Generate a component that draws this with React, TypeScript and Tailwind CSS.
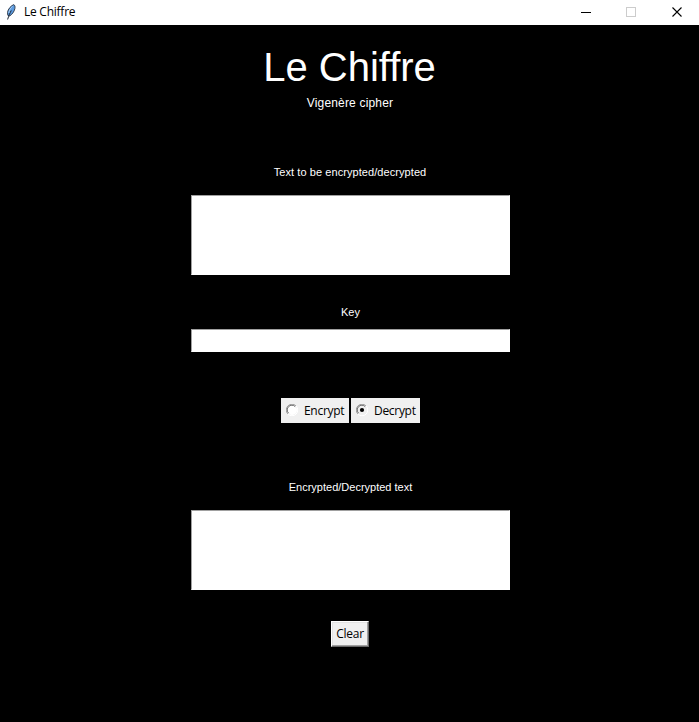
import React, { useState } from "react";

const ARIAL = "font-['Liberation_Sans',Arial,sans-serif]";
const UI = "font-['Open_Sans','Noto_Sans',sans-serif]";

function Feather() {
  return (
    <svg width="16" height="16" viewBox="0 0 16 16" className="ml-[3px] mt-1 shrink-0">
      <path d="M10.800.6C8 1.600 4.900 5.200 4.500 8.500l.3 2.800L6.600 12c2.400-1.500 4.700-4.300 5.300-7.500.3-1.700.1-3.200-1.100-3.900Z" fill="#5b9be0" stroke="#2a3340" strokeWidth=".9" />
      <path d="M8.300 6.500C7 9 5.800 11.500 4.600 15.500" fill="none" stroke="#1c2430" strokeWidth="1" />
      <path d="M9.600 2.300C7.500 4 6.200 6.500 5.800 9" fill="none" stroke="#a9cdf2" strokeWidth="1" />
    </svg>
  );
}

function TitleBar() {
  return (
    <header className="flex h-[25px] items-start bg-white text-black">
      <Feather />
      <span className={`${UI} ml-[5px] mt-[3px] text-[12px] leading-[18px] tracking-[-0.25px]`}>Le Chiffre</span>
      <div className="ml-auto mt-[7px] mr-4 flex gap-[35px]">
        <svg width="11" height="11" shapeRendering="crispEdges"><path d="M1 5.500H11" stroke="#000" /></svg>
        <svg width="11" height="11" shapeRendering="crispEdges"><path d="M.5.500H9.500V9.500H.5Z" fill="none" stroke="#ccc" /></svg>
        <svg width="11" height="11"><path d="M.5.500 9.500 9.500M9.500.500.5 9.500" stroke="#000" strokeWidth="1.100" /></svg>
      </div>
    </header>
  );
}

function Radio({ label, width, checked, onSelect }: { label: string; width: string; checked: boolean; onSelect: () => void }) {
  return (
    <button role="radio" aria-checked={checked} onClick={onSelect} className={`${width} flex h-[25px] items-start bg-[#f0f0f0] text-black`}>
      <svg width="12" height="12" viewBox="0 0 12 12" className="ml-[5px] mt-1.5 shrink-0">
        <circle cx="6" cy="6" r="5" fill={checked ? "#f0f0f0" : "#fff"} />
        <path d="M1.900 10.100A5.500 5.500 0 0 1 10.100 1.900" fill="none" stroke="#a0a0a0" />
        <path d="M2.600 9.200A4.600 4.600 0 0 1 9.200 2.600" fill="none" stroke="#696969" />
        <path d="M10.100 1.900A5.500 5.500 0 0 1 1.900 10.100" fill="none" stroke="#fff" />
        {checked && <circle cx="6" cy="6" r="2.100" fill="#000" />}
      </svg>
      <span className={`${UI} ml-1.5 mt-1 text-[12px] leading-[18px] tracking-[-0.3px]`}>{label}</span>
    </button>
  );
}

const sunken = "block w-[319px] resize-none rounded-none border border-t-[#a0a0a0] border-l-[#a0a0a0] border-b-white border-r-white bg-white px-1 text-xs text-black outline-none";

export default function App() {
  const [mode, setMode] = useState("decrypt");
  const [text, setText] = useState("");
  const [key, setKey] = useState("");
  return (
    <div className="flex h-[722px] w-[699px] flex-col overflow-hidden bg-black">
      <TitleBar />
      <main className={`${ARIAL} flex flex-col items-center pl-[2px] text-white`}>
        <h1 className="mt-[19px] mr-[2px] h-[46px] text-[40px] leading-[46px]">Le Chiffre</h1>
        <p className="mt-[5px] mr-px h-4 text-xs leading-4 tracking-[0.18px]">Vigenère cipher</p>
        <label className="mt-[53px] mr-px h-4 text-[11px] leading-4 tracking-[0.07px]">Text to be encrypted/decrypted</label>
        <textarea className={`${sunken} mt-[15px] h-[80px]`} value={text} onChange={(e) => setText(e.target.value)} />
        <label className="mt-[29px] h-4 text-[11px] leading-4">Key</label>
        <input className={`${sunken} mt-[9px] h-[23px]`} value={key} onChange={(e) => setKey(e.target.value)} />
        <div className="mt-[46px] flex gap-[2px]">
          <Radio label="Encrypt" width="w-[68px]" checked={mode === "encrypt"} onSelect={() => setMode("encrypt")} />
          <Radio label="Decrypt" width="w-[69px]" checked={mode === "decrypt"} onSelect={() => setMode("decrypt")} />
        </div>
        <label className="mt-[56px] h-4 text-[11px] leading-4">Encrypted/Decrypted text</label>
        <textarea readOnly className={`${sunken} mt-[15px] h-[80px]`} />
        <button
          onClick={() => { setText(""); setKey(""); }}
          className={`${UI} mt-[31px] mr-[1px] h-[26px] w-[38px] border border-t-white border-l-white border-b-[#696969] border-r-[#696969] bg-[#f0f0f0] text-[12px] leading-[22px] tracking-[-0.25px] text-black shadow-[inset_-1px_-1px_#a0a0a0,inset_1px_1px_#e3e3e3]`}
        >
          Clear
        </button>
      </main>
    </div>
  );
}
